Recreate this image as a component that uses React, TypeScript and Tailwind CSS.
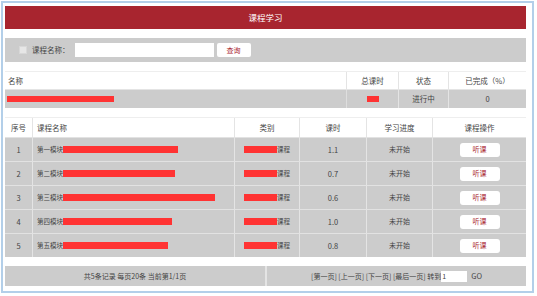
import React from 'react';

const font = { fontFamily: '"Noto Sans CJK SC", "Liberation Sans", sans-serif' };

const rows = [
  { no: 1, name: '第一模块', bar: 115, hours: '1.1' },
  { no: 2, name: '第二模块', bar: 112, hours: '0.7' },
  { no: 3, name: '第三模块', bar: 152, hours: '0.6' },
  { no: 4, name: '第四模块', bar: 109, hours: '1.0' },
  { no: 5, name: '第五模块', bar: 105, hours: '0.8' },
];

const cell = 'flex items-center justify-center border-r border-[#e4e4e4]';

export default function App() {
  return (
    <div className="w-[537px] h-[296px] bg-white text-[7.5px] text-[#444] pt-px pl-px" style={font}>
      <div className="w-[533px] h-[292px] border-2 border-[#b3cfe9] pl-[2px] pr-[6px] pt-[3px]">
        {/* header */}
        <div className="h-[23px] bg-[#a8252f] flex items-center justify-center text-white text-[8.5px]">课程学习</div>

        {/* search */}
        <div className="mt-[9px] h-[24px] bg-[#cccccc] flex items-center">
          <span className="ml-[14px] w-[8px] h-[8px] bg-[#e6e6e6] border border-[#d8d8d8]" />
          <span className="ml-[5px]">课程名称：</span>
          <span className="ml-[5px] w-[139px] h-[14px] bg-white" />
          <span className="ml-[3px] w-[34px] h-[14px] bg-white rounded-[2px] flex items-center justify-center text-[#a8252f] text-[7px]">查询</span>
        </div>

        {/* summary */}
        <div className="mt-[9px]">
          <div className="h-[19px] flex border-t border-[#eeeeee] border-b border-b-[#e4e4e4]">
            <div className="w-[342px] flex items-center pl-[3px] border-r border-[#e4e4e4]">名称</div>
            <div className={`w-[52px] ${cell}`}>总课时</div>
            <div className={`w-[50px] ${cell}`}>状态</div>
            <div className="flex-1 flex items-center justify-center">已完成（%）</div>
          </div>
          <div className="h-[18px] flex bg-[#cccccc]">
            <div className="w-[342px] flex items-center pl-[2px] border-r border-[#dedede]">
              <span className="w-[107px] h-[6px] bg-[#ff3333]" />
            </div>
            <div className={`w-[52px] ${cell} border-[#dedede]`}>
              <span className="w-[12px] h-[6px] bg-[#ff3333]" />
            </div>
            <div className={`w-[50px] ${cell} border-[#dedede]`}>进行中</div>
            <div className="flex-1 flex items-center justify-center">0</div>
          </div>
        </div>

        {/* main table */}
        <div className="mt-[9px]">
          <div className="h-[20px] flex border-t border-[#eeeeee]">
            <div className={`w-[28px] ${cell}`}>序号</div>
            <div className="w-[202px] flex items-center pl-[4px] border-r border-[#e4e4e4]">课程名称</div>
            <div className={`w-[65px] ${cell}`}>类别</div>
            <div className={`w-[67px] ${cell}`}>课时</div>
            <div className={`w-[66px] ${cell}`}>学习进度</div>
            <div className="flex-1 flex items-center justify-center">课程操作</div>
          </div>
          {rows.map((r) => (
            <div key={r.no} className="h-[24px] flex bg-[#cccccc] border-t border-[#e2e2e2]">
              <div className={`w-[28px] ${cell}`}>{r.no}</div>
              <div className="w-[202px] flex items-center pl-[4px] border-r border-[#e4e4e4] text-[6.5px]">
                <span>{r.name}</span>
                <span className="h-[7px] bg-[#ff3333]" style={{ width: r.bar }} />
              </div>
              <div className={`w-[65px] ${cell} text-[6.5px]`}>
                <span className="w-[33px] h-[7px] bg-[#ff3333]" />
                <span>课程</span>
              </div>
              <div className={`w-[67px] ${cell}`}>{r.hours}</div>
              <div className={`w-[66px] ${cell} text-[7px]`}>未开始</div>
              <div className="flex-1 flex items-center justify-center">
                <span className="w-[40px] h-[14px] bg-white rounded-[3px] flex items-center justify-center text-[#a8252f] text-[7px]">听课</span>
              </div>
            </div>
          ))}
        </div>

        {/* footer */}
        <div className="mt-[9px] h-[20px] flex bg-[#cccccc]">
          <div className="w-[262px] flex items-center justify-center border-r-2 border-[#e4e4e4] text-[7px]">共5条记录 每页20条 当前第1/1页</div>
          <div className="flex-1 flex items-center justify-center text-[7px]">
            <span>[第一页] [上一页] [下一页] [最后一页] 转到</span>
            <span className="w-[26px] h-[11px] bg-white flex items-center pl-px">1</span>
            <span className="ml-[4px] text-[7.5px]">GO</span>
          </div>
        </div>
      </div>
    </div>
  );
}
